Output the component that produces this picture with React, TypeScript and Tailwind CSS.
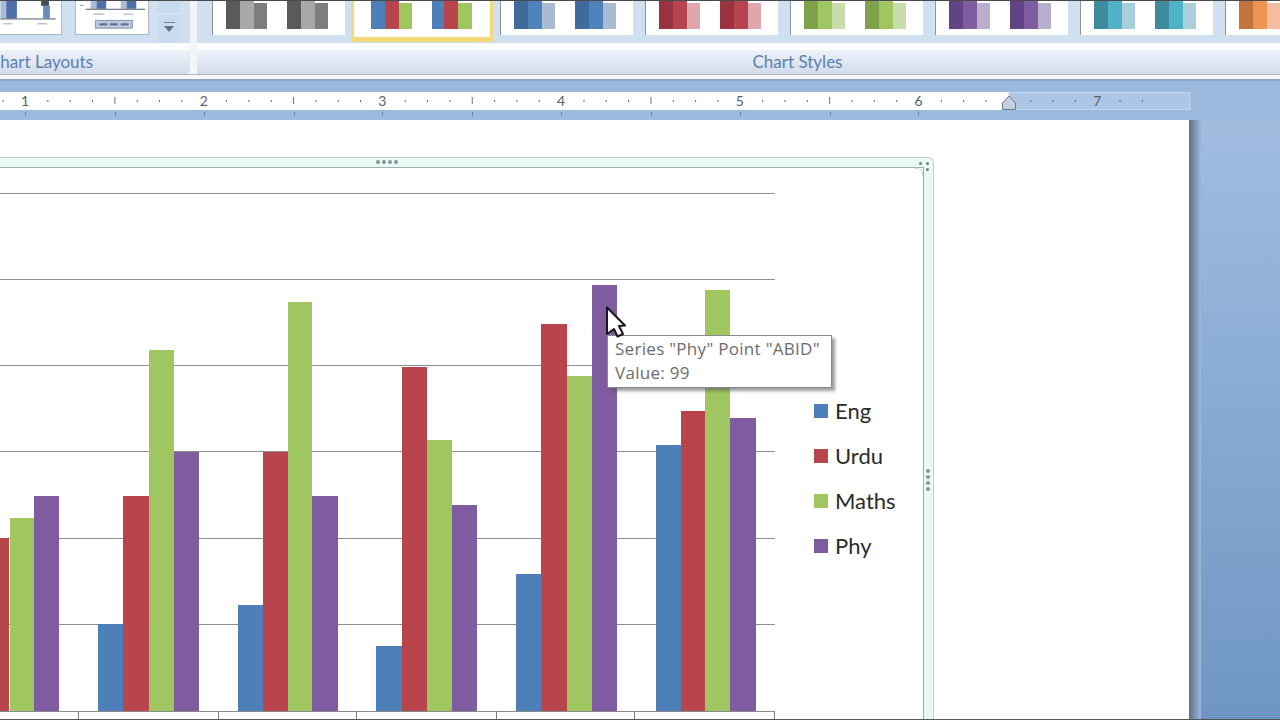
const BLUE = "#4d80b8";
const RED = "#b8444c";
const GREEN = "#9fc660";
const PURPLE = "#7f5b9f";

// [x, width, top, colour] in page coordinates
const bars: [number, number, number, string][] = [
  [-16, 25, 538, RED], [10, 24, 518, GREEN], [34, 25, 496, PURPLE],
  [98, 25, 624, BLUE], [123, 26, 496, RED], [149, 25, 350, GREEN], [174, 25, 452, PURPLE],
  [238, 25, 605, BLUE], [263, 25, 452, RED], [288, 24, 302, GREEN], [312, 26, 496, PURPLE],
  [376, 26, 646, BLUE], [402, 25, 367, RED], [427, 25, 440, GREEN], [452, 25, 505, PURPLE],
  [516, 25, 574, BLUE], [541, 26, 324, RED], [567, 25, 376, GREEN], [592, 25, 285, PURPLE],
  [656, 25, 445, BLUE], [681, 24, 411, RED], [705, 25, 290, GREEN], [730, 26, 418, PURPLE],
];

const grid = [193, 279, 365, 451, 538, 624];
const axisTicks = [78, 218, 356, 496, 634, 774];

const legend = [
  { name: "Eng", color: "bg-[#4d80b8]" },
  { name: "Urdu", color: "bg-[#b8444c]" },
  { name: "Maths", color: "bg-[#9fc660]" },
  { name: "Phy", color: "bg-[#7f5b9f]" },
];

const grayStyle = ["#5a5a5a", "#a8a8a8", "#7d7d7d"];
const otherStyles = [
  ["#3e6a9c", "#4e82ba", "#a9bad3"],
  ["#9a3240", "#b8444f", "#dfa6ad"],
  ["#7da24a", "#9fc660", "#c9dcab"],
  ["#604483", "#7f5b9f", "#b9aecb"],
  ["#3d8b9c", "#4fb2c6", "#a9d0da"],
  ["#c2743a", "#ee9350", "#f3bda1"],
];

function MiniBars({ colors, className }: { colors: string[]; className?: string }) {
  return (
    <svg width="41" height="28" viewBox="0 0 41 28" className={className}>
      <rect x="0" y="0" width="14" height="28" fill={colors[0]} />
      <rect x="14" y="0" width="14" height="28" fill={colors[1]} />
      <rect x="28" y="2" width="13" height="26" fill={colors[2]} />
    </svg>
  );
}

function StyleTile({ colors }: { colors: string[] }) {
  return (
    <div className="flex h-[34px] w-[133px] shrink-0 items-start border-l border-[#8f9299] bg-white pl-[13px]">
      <MiniBars colors={colors} />
      <MiniBars colors={colors} className="ml-[20px]" />
    </div>
  );
}

function LayoutThumbs() {
  return (
    <div className="flex h-[34px] items-start">
      <svg width="62" height="34" viewBox="0 0 62 34" className="shrink-0 bg-white border-r border-b border-[#aab8c8]">
        <rect x="0" y="0" width="6" height="18" fill="#a9bcd8" />
        <rect x="6" y="0" width="11" height="18" fill="#4f6fa8" />
        <rect x="42" y="0" width="8" height="5" fill="#444b58" />
        <rect x="44" y="5" width="7" height="13" fill="#6a8cba" />
        <rect x="0" y="18" width="57" height="1" fill="#4a5564" />
        <rect x="3" y="23" width="9" height="1" fill="#9aa6b4" />
        <rect x="38" y="23" width="10" height="1" fill="#9aa6b4" />
      </svg>
      <svg width="74" height="34" viewBox="0 0 74 34" className="ml-[13px] shrink-0 bg-white border border-t-0 border-[#aab8c8]">
        <rect x="4" y="4" width="4" height="1" fill="#8b97a6" />
        <rect x="15" y="0" width="6" height="8" fill="#a9bcd8" />
        <rect x="21" y="0" width="10" height="8" fill="#4f6fa8" />
        <rect x="46" y="0" width="6" height="8" fill="#a9bcd8" />
        <rect x="52" y="0" width="10" height="8" fill="#4f6fa8" />
        <rect x="10" y="8" width="61" height="1" fill="#4a5564" />
        <rect x="18" y="13" width="11" height="1" fill="#9aa6b4" />
        <rect x="49" y="13" width="10" height="1" fill="#9aa6b4" />
        <rect x="20" y="20" width="38" height="8" fill="#b9c7e0" stroke="#8593ad" />
        <rect x="24" y="23" width="8" height="2" fill="#5b6a84" />
        <rect x="35" y="23" width="8" height="2" fill="#5b6a84" />
        <rect x="46" y="23" width="8" height="2" fill="#5b6a84" />
      </svg>
    </div>
  );
}

function Ruler() {
  const step = 178.7 / 8;
  const marks = Array.from({ length: 52 }, (_, i) => i);
  return (
    <svg width="1191" height="28" viewBox="0 0 1191 28" className="block shrink-0">
      <rect x="0" y="0" width="1009" height="18" fill="#ffffff" />
      <rect x="1009" y="0.5" width="181" height="17" fill="#adc6e6" stroke="#c4d6ee" />
      {marks.map((i) => {
        const x = 25 - step + i * step;
        const n = i - 1;
        if (n >= 0 && n % 8 === 0) return null;
        if (n % 4 === 0) {
          return x < 1009 ? <rect key={i} x={x} y="5" width="1" height="7" fill="#6f7378" /> : null;
        }
        return x < 1170 && x > 0 ? <rect key={i} x={x} y="8" width="1" height="2" fill="#5f6670" /> : null;
      })}
      {[1, 2, 3, 4, 5, 6, 7].map((n) => (
        <text
          key={n}
          x={25 + (n - 1) * 178.7}
          y="14"
          textAnchor="middle"
          fontSize="14"
          fontFamily="Lato, sans-serif"
          fill="#5a5f68"
        >
          {n}
        </text>
      ))}
      {[25, 115, 204, 294, 382, 472, 561, 651, 740, 830, 918].map((x) => (
        <rect key={x} x={x} y="20" width="1" height="4" fill="#6d86a8" />
      ))}
      <path d="M1009 4 L1015.5 11 V17.5 H1002.5 V11 Z" fill="#c3d0df" stroke="#6d7884" />
    </svg>
  );
}

function Cursor() {
  return (
    <svg width="22" height="32" viewBox="0 0 22 32" className="absolute left-[605px] top-[186px]">
      <path
        d="M2 1.5 L20 19.5 L14 20 L18 28 L12.5 30.5 L9 23 L2 28 Z"
        fill="#ffffff"
        stroke="#16161c"
        strokeWidth="2"
        strokeLinejoin="round"
      />
    </svg>
  );
}

function Handle({ className }: { className: string }) {
  return <span className={`absolute size-[3px] rounded-full bg-[#6f7f80] ${className}`} />;
}

export default function App() {
  return (
    <div className="relative flex h-[720px] w-[1280px] flex-col overflow-hidden bg-[#9bb9dc] font-['Lato',sans-serif]">
      {/* ribbon */}
      <div className="flex h-[75px] shrink-0 border-t border-b border-t-[#4a4a4a] border-b-[#b5b3b3] bg-[#fbfdff]">
        <div className="flex w-[190px] shrink-0 flex-col overflow-hidden rounded-br-[4px]">
          <div className="flex h-[42px] shrink-0 bg-[#cfe0f1]">
            <LayoutThumbs />
            <div className="ml-[9px] flex h-[42px] w-[22px] shrink-0 flex-col rounded-br-[3px] bg-[#c9dcef]">
              <div className="h-[13px] border-b border-[#dfeaf5]" />
              <div className="flex flex-col items-center pt-[8px]">
                <div className="h-px w-[11px] bg-[#6f7e90]" />
                <div className="mt-[3px] size-0 border-x-[5px] border-t-[6px] border-x-transparent border-t-[#5e7087]" />
              </div>
            </div>
          </div>
          <div className="mt-[7px] flex h-[24px] flex-1 justify-end bg-gradient-to-b from-[#eef2f9] to-[#d2dcec] pr-[97px]">
            <span className="whitespace-nowrap text-[17px] leading-[24px] text-[#5b7fae]">Chart Layouts</span>
          </div>
        </div>
        <div className="w-[7px] shrink-0 bg-[#f1f5fa]" />
        <div className="flex min-w-0 flex-1 flex-col">
          <div className="flex h-[42px] shrink-0 items-start overflow-hidden bg-[#cfe0f1] pl-[15px]">
            <StyleTile colors={grayStyle} />
            {/* selected style */}
            <div className="z-10 ml-[6px] flex h-[41px] w-[142px] shrink-0 items-start rounded-b-[3px] border-x-[3px] border-b-[5px] border-[#f5d878] bg-white pl-[17px]">
              <svg width="41" height="28" viewBox="0 0 41 28">
                <rect x="0" y="0" width="14" height="28" fill={BLUE} />
                <rect x="14" y="0" width="14" height="28" fill={RED} />
                <rect x="28" y="2" width="13" height="26" fill={GREEN} />
              </svg>
              <svg width="40" height="28" viewBox="0 0 40 28" className="ml-[20px]">
                <rect x="0" y="0" width="12" height="28" fill={BLUE} />
                <rect x="12" y="0" width="14" height="28" fill={RED} />
                <rect x="26" y="2" width="14" height="26" fill={GREEN} />
              </svg>
            </div>
            <div className="ml-[7px] flex shrink-0 gap-[12px]">
              {otherStyles.map((colors) => (
                <StyleTile key={colors[0]} colors={colors} />
              ))}
            </div>
          </div>
          <div className="mt-[7px] flex flex-1 justify-center bg-gradient-to-b from-[#eef2f9] to-[#d2dcec] pl-[118px]">
            <span className="whitespace-nowrap text-[17px] leading-[24px] text-[#5b7fae]">Chart Styles</span>
          </div>
        </div>
      </div>

      {/* ruler band */}
      <div className="h-[4px] shrink-0 bg-[#f4f6f9]" />
      <div className="flex h-[41px] shrink-0 flex-col border-t-[2px] border-[#8fa6c4] bg-[#9bb9dc] pt-[11px]">
        <Ruler />
      </div>

      {/* document area */}
      <div className="flex min-h-0 flex-1">
        <div className="relative w-[1189px] shrink-0 overflow-hidden bg-white pt-[37px]">
          <div className="relative flex h-full w-[934px] flex-col rounded-tr-[6px] border-t border-r border-[#bcd2cf] bg-[#e8f9f6] pt-[9px] pr-[9px]">
            <div className="relative flex-1 border-t border-r border-[#9fb0ae] bg-white">
              <svg width="923" height="552" viewBox="0 168 923 552" className="block">
                {grid.map((y) => (
                  <rect key={y} x="0" y={y} width="775" height="1" fill="#8e8e8e" />
                ))}
                {bars.map(([x, w, top, fill]) => (
                  <rect key={`${x}-${top}`} x={x} y={top} width={w} height={711 - top} fill={fill} />
                ))}
                <rect x="0" y="711" width="775" height="1" fill="#8a8a8a" />
                {axisTicks.map((x) => (
                  <rect key={x} x={x} y="711" width="1" height="9" fill="#7d7d7d" />
                ))}
              </svg>
              <ul className="absolute left-[814px] top-[231px] flex flex-col gap-[22px]">
                {legend.map((item) => (
                  <li key={item.name} className="flex h-[23px] items-center gap-[7px] text-[22px] leading-[23px] text-[#2b2b2b]">
                    <span className={`size-[14px] ${item.color}`} />
                    {item.name}
                  </li>
                ))}
              </ul>
            </div>
            <span className="absolute left-[376px] top-[2px] flex gap-[2px]">
              <span className="size-[4px] rounded-full bg-[#8a9596]" />
              <span className="size-[4px] rounded-full bg-[#8a9596]" />
              <span className="size-[4px] rounded-full bg-[#8a9596]" />
              <span className="size-[4px] rounded-full bg-[#8a9596]" />
            </span>
            <span className="absolute left-[926px] top-[311px] flex flex-col gap-[2px]">
              <span className="size-[4px] rounded-full bg-[#8a9596]" />
              <span className="size-[4px] rounded-full bg-[#8a9596]" />
              <span className="size-[4px] rounded-full bg-[#8a9596]" />
              <span className="size-[4px] rounded-full bg-[#8a9596]" />
            </span>
            <Handle className="left-[919px] top-[4px]" />
            <Handle className="left-[926px] top-[4px]" />
            <Handle className="left-[926px] top-[10px]" />
            <span className="absolute left-[915px] top-[10px] size-[8px] rounded-tr-[6px] border-t border-r border-[#cfd8d8] bg-white" />
          </div>

          {/* tooltip over the bars */}
          <div className="absolute left-[607px] top-[215px] h-[53px] w-[225px] border border-[#8a8a8a] bg-white pl-[7px] pt-[1px] font-['Open_Sans',sans-serif] text-[17px] leading-[24px] tracking-[0.3px] text-[#6c6c6c] shadow-[3px_3px_3px_rgba(90,90,90,0.6)]">
            <div className="whitespace-nowrap">Series "Phy" Point "ABID"</div>
            <div>Value: 99</div>
          </div>
          <Cursor />
        </div>
        <div className="w-[12px] shrink-0 bg-gradient-to-r from-[#5f7089] to-[#9bb9dc]" />
        <div className="flex-1 bg-gradient-to-b from-[#a0bde0] to-[#6f96c3]" />
      </div>
      <div className="absolute inset-x-0 bottom-0 h-px bg-[#555555]" />
    </div>
  );
}
